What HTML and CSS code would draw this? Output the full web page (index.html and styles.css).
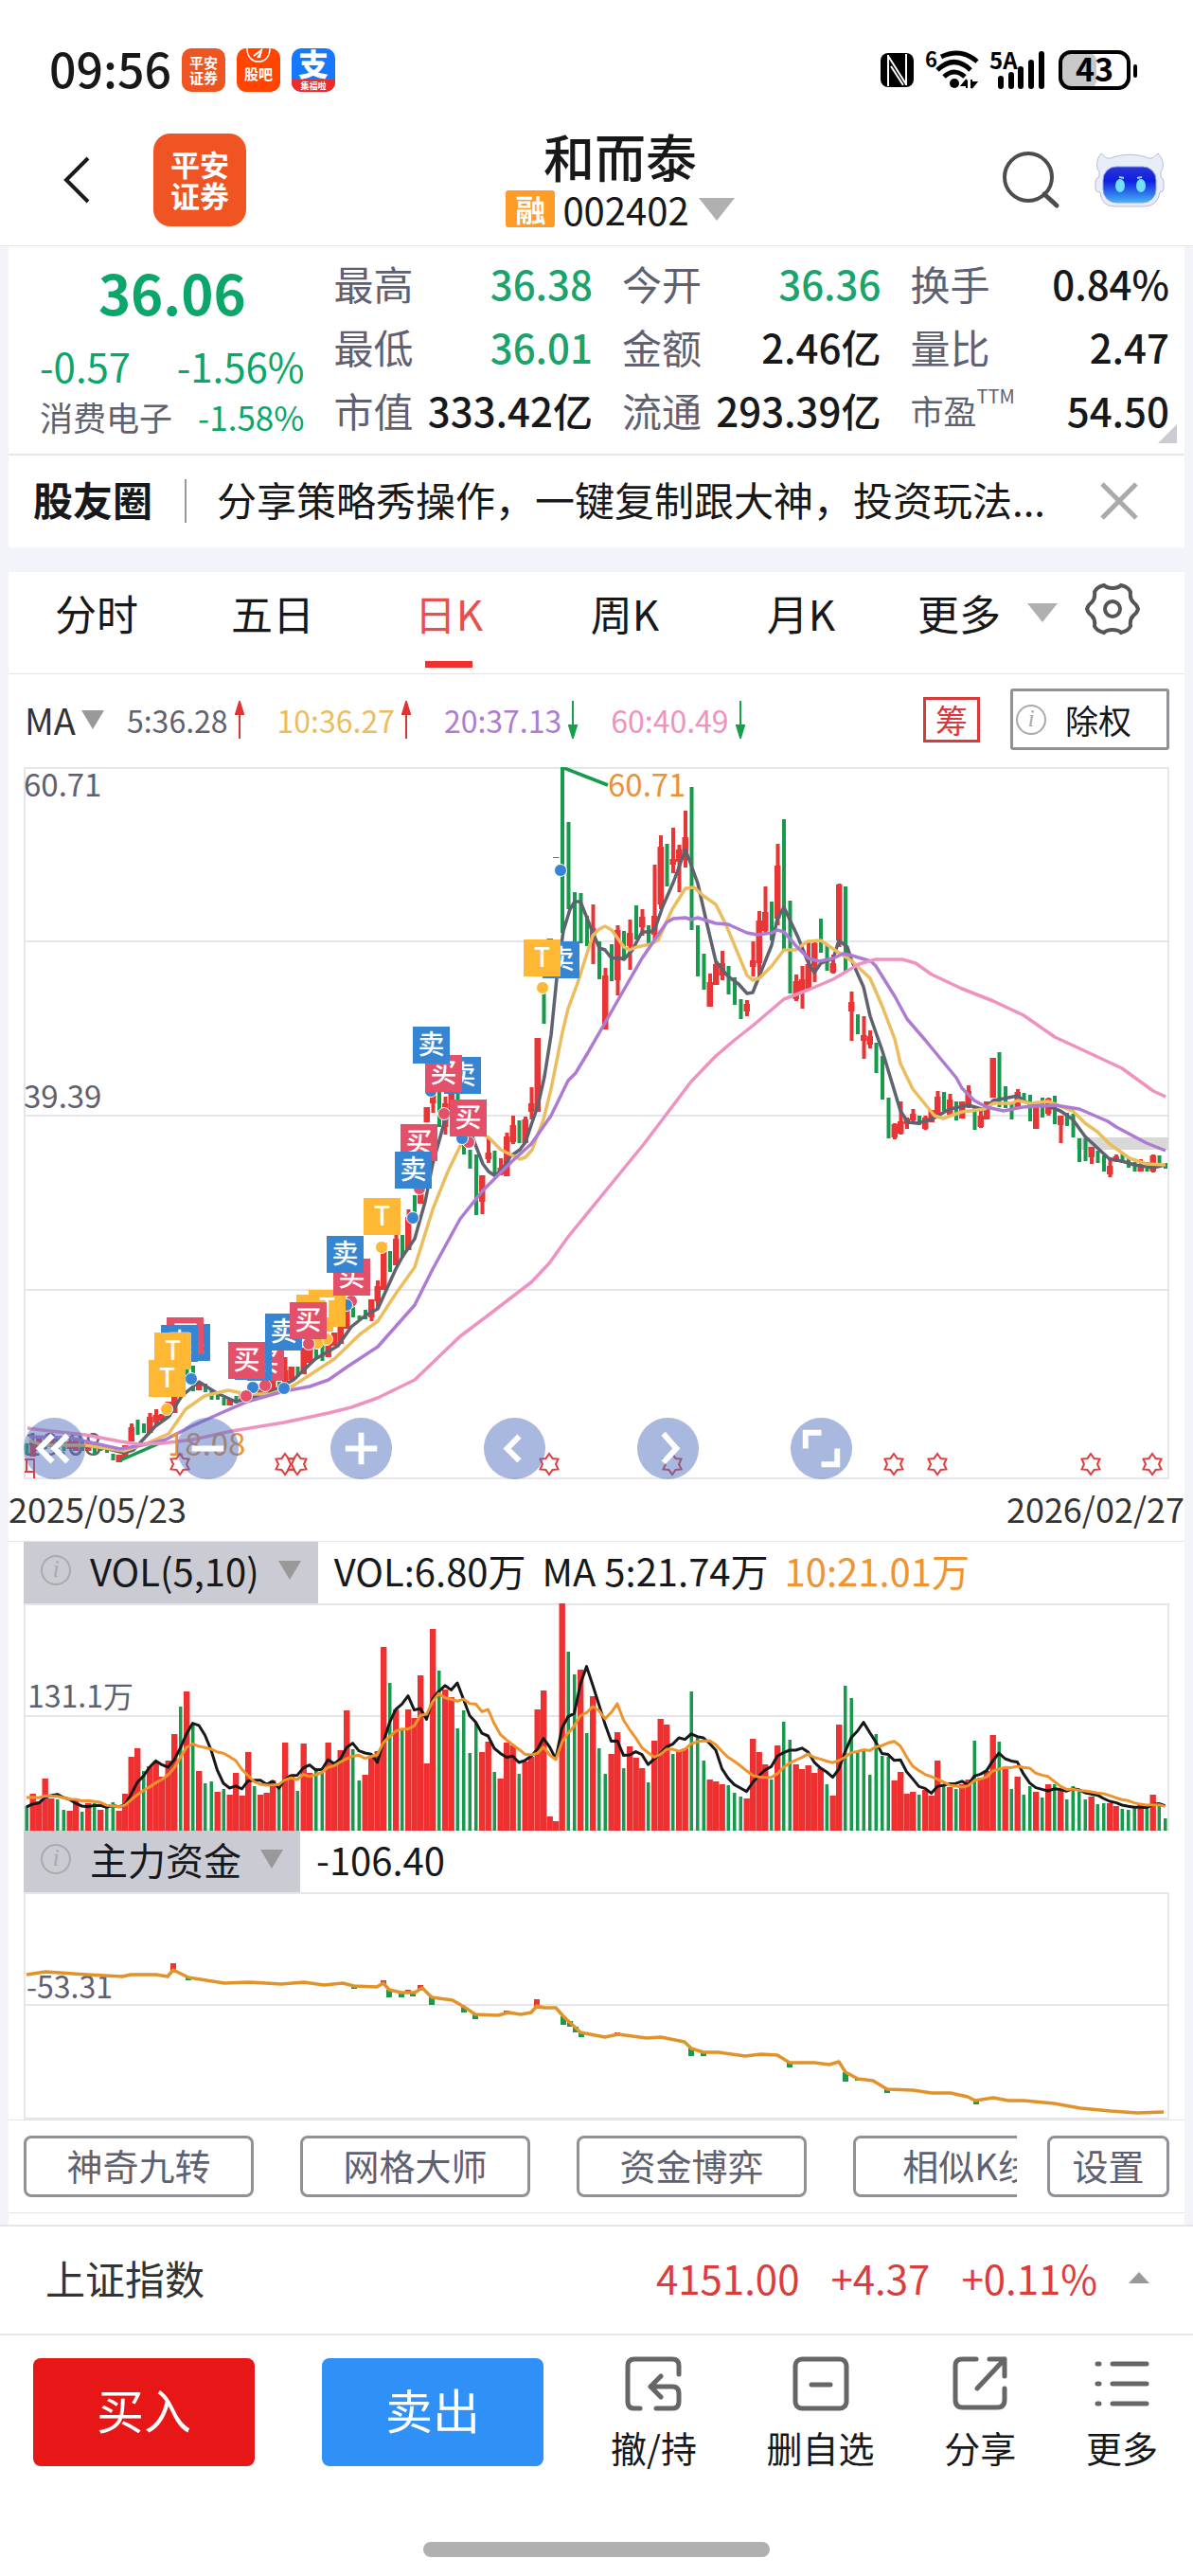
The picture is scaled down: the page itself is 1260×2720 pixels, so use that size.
FILE: index.html
```html
<!DOCTYPE html>
<html lang="zh-CN">
<head>
    <meta charset="UTF-8">
    <meta name="viewport" content="width=device-width, initial-scale=1.0">
    <title>和而泰 002402</title>
    <link rel="stylesheet" href="styles.css">
</head>
<body>
    <div class="status">
        <span class="time">09:56</span>
        <span class="app app-pa">平安<br>证券</span>
        <span class="app app-gb">
            <svg viewBox="0 0 46 16" width="46" height="16"><path d="M11 0c0 9 5 14 12 14S35 9 35 0" fill="none" stroke="#fff" stroke-width="1.5"/><path d="M18 8l8-6-2 8M22 10l4-6" stroke="#fff" stroke-width="2" fill="none"/></svg>
            股吧
        </span>
        <span class="app app-zfb"><b>支</b><i>集福啦</i></span>
        <svg class="sys" viewBox="0 0 276 48" width="276" height="48">
            <rect x="1" y="6" width="35" height="36" rx="8"/>
            <path d="M9 8v33M28 7v33M9 9l19 30M12 20l13 20" stroke="#fff" stroke-width="2" fill="none"/>
            <text x="48" y="21" font-size="22" font-weight="bold">6</text>
            <g fill="none" stroke="#000" stroke-width="5">
                <path d="M65 10q21-10 38 5M61 24q18-17 35 0M68 31q11-10 22 0"/>
            </g>
            <circle cx="79" cy="38" r="5"/>
            <path d="M92 35v8M92 34l-5 6h5M97 43v-9M97 43l5-6h-5" stroke="#000" stroke-width="2"/>
            <text x="116" y="23" font-size="24" font-weight="bold">5A</text>
            <path d="M128 33v8M139 29v12M149 23v18M160 16v25M171 7v34" stroke="#000" stroke-width="6" stroke-linecap="round"/>
            <rect x="193" y="6" width="36" height="37" fill="#c8c8c8" rx="8"/>
            <rect x="191" y="5" width="72" height="38" rx="11" fill="none" stroke="#000" stroke-width="4"/>
            <text x="227" y="36" font-size="34" font-weight="bold" text-anchor="middle">43</text>
            <path d="M270 20v10" stroke="#000" stroke-width="4" stroke-linecap="round"/>
        </svg>
    </div>

    <header class="header">
        <button class="back" aria-label="返回"><svg viewBox="0 0 30 50" width="30" height="50"><path d="M27 2L4 25l23 23" fill="none" stroke="#1a1a1a" stroke-width="4"/></svg></button>
        <a class="logo" href="#">平安<br>证券</a>
        <div class="stock">
            <h1>和而泰</h1>
            <p><em>融</em>002402<span class="down big"></span></p>
        </div>
        <button class="search" aria-label="搜索"><svg viewBox="0 0 62 62" width="62" height="62"><circle cx="28" cy="28" r="25" fill="none" stroke="#4d4d4d" stroke-width="4"/><path d="M45 46l13 12" stroke="#4d4d4d" stroke-width="5" stroke-linecap="round"/></svg></button>
        <button class="robot" aria-label="智能助手">
            <svg viewBox="0 0 74 60" width="74" height="60">
                <defs><linearGradient id="face" x1="0" y1="0" x2="0" y2="1"><stop offset="0" stop-color="#2a35d8"/><stop offset=".4" stop-color="#0f1fe0"/><stop offset="1" stop-color="#45b4f5"/></linearGradient></defs>
                <path d="M7 2c4 3 5 6 10 5 12-5 28-5 40 0 5 1 6-2 10-5 6 6 7 15 3 19v6q3 1 3 5v7q0 4-4 4-2 15-17 15H22Q7 58 6 43q-5 0-5-4v-7q0-4 4-5v-6C1 17 2 8 7 2z" fill="#e9edf8" stroke="#b4bdd6" stroke-width="1"/>
                <rect x="9" y="16" width="56" height="38" rx="14" fill="url(#face)" stroke="#8fa0e8"/>
                <ellipse cx="27" cy="36" rx="5" ry="7" fill="#6fe0ff"/><ellipse cx="49" cy="36" rx="5" ry="7" fill="#6fe0ff"/>
                <path d="M26 27l5 1M50 27l-5 1" stroke="#8fd8ff" stroke-width="2"/>
            </svg>
        </button>
    </header>

    <main class="main">
        <section class="quote">
            <div class="now">
                <strong>36.06</strong>
                <p class="change"><span>-0.57</span><span>-1.56%</span></p>
                <p class="sector"><a href="#">消费电子</a><span>-1.58%</span></p>
            </div>
            <dl>
                <div><dt>最高</dt><dd class="fall">36.38</dd></div>
                <div><dt>最低</dt><dd class="fall">36.01</dd></div>
                <div><dt>市值</dt><dd>333.42亿</dd></div>
            </dl>
            <dl>
                <div><dt>今开</dt><dd class="fall">36.36</dd></div>
                <div><dt>金额</dt><dd>2.46亿</dd></div>
                <div><dt>流通</dt><dd>293.39亿</dd></div>
            </dl>
            <dl>
                <div><dt>换手</dt><dd>0.84%</dd></div>
                <div><dt>量比</dt><dd>2.47</dd></div>
                <div><dt class="pe">市盈<sup>TTM</sup></dt><dd>54.50</dd></div>
            </dl>
        </section>

        <section class="notice">
            <b>股友圈</b>
            <a href="#">分享策略秀操作，一键复制跟大神，投资玩法...</a>
            <button aria-label="关闭"><svg viewBox="0 0 42 42" width="42" height="42"><path d="M3 3l36 36M39 3L3 39" stroke="#aaa" stroke-width="5"/></svg></button>
        </section>

        <section class="panel">
            <nav class="tabs">
                <button>分时</button>
                <button>五日</button>
                <button class="active">日K</button>
                <button>周K</button>
                <button>月K</button>
                <button class="more">更多<span class="down"></span></button>
                <button class="gear" aria-label="设置"><svg viewBox="0 0 58 58" width="58" height="58"><path d="M20 4q3 3 9 3t9-3q8 2 10 7-1 7 3 11 4 3 5 7-1 4-5 7-4 4-3 11-2 5-10 7-3-3-9-3t-9 3q-8-2-10-7 1-7-3-11-4-3-5-7 1-4 5-7 4-4 3-11 2-5 10-7z" fill="none" stroke="#555" stroke-width="4"/><circle cx="29" cy="29" r="8" fill="none" stroke="#555" stroke-width="4"/></svg></button>
            </nav>

            <div class="ma-row">
                <button class="ma">MA<span class="down soft"></span></button>
                <span class="ma5">5:36.28<svg class="arrow rise" viewBox="0 0 10 40"><path d="M5 40V8M1 14L5 1l4 13z"/></svg></span>
                <span class="ma10">10:36.27<svg class="arrow rise" viewBox="0 0 10 40"><path d="M5 40V8M1 14L5 1l4 13z"/></svg></span>
                <span class="ma20">20:37.13<svg class="arrow drop" viewBox="0 0 10 40"><path d="M5 0v32M1 26l4 13 4-13z"/></svg></span>
                <span class="ma60">60:40.49<svg class="arrow drop" viewBox="0 0 10 40"><path d="M5 0v32M1 26l4 13 4-13z"/></svg></span>
                <button class="chip">筹</button>
                <button class="adjust"><i class="info">i</i>除权</button>
            </div>

            <div class="kline">
                <svg id="kline" viewBox="0 0 1210 752"></svg>
                <div class="tools">
                    <button aria-label="最早"><svg viewBox="0 0 66 66"><path d="M31 19L17 33l14 14M47 19L33 33l14 14"/></svg></button>
                    <button aria-label="缩小"><svg viewBox="0 0 66 66"><path d="M16 33h34"/></svg></button>
                    <button aria-label="放大"><svg viewBox="0 0 66 66"><path d="M16 33h34M33 16v34"/></svg></button>
                    <button aria-label="左移"><svg viewBox="0 0 66 66"><path d="M38 20L25 33l13 13"/></svg></button>
                    <button aria-label="右移"><svg viewBox="0 0 66 66"><path d="M28 17l14 16-14 15"/></svg></button>
                    <button aria-label="全屏"><svg viewBox="0 0 66 66"><path d="M16 33V16h17M33 50h17V33"/></svg></button>
                </div>
            </div>
            <div class="dates"><span>2025/05/23</span><span>2026/02/27</span></div>

            <div class="sub-head">
                <button><i class="info">i</i>VOL(5,10)<span class="down soft"></span></button>
                <span>VOL:6.80万</span><span>MA 5:21.74万</span><span class="orange">10:21.01万</span>
            </div>
            <svg id="vol" class="chart" viewBox="0 0 1210 240"></svg>

            <div class="sub-head">
                <button><i class="info">i</i>主力资金<span class="down soft"></span></button>
                <span>-106.40</span>
            </div>
            <svg id="fund" class="chart" viewBox="0 0 1210 240"></svg>

            <div class="plugins">
                <div class="list">
                    <button>神奇九转</button>
                    <button>网格大师</button>
                    <button>资金博弈</button>
                    <button>相似K线</button>
                </div>
                <button class="set">设置</button>
            </div>
        </section>
    </main>

    <div class="index">
        <span class="name">上证指数</span>
        <span>4151.00</span><span>+4.37</span><span>+0.11%</span>
        <i class="up"></i>
    </div>

    <footer class="footer">
        <button class="buy">买入</button>
        <button class="sell">卖出</button>
        <div class="actions">
            <a href="#"><svg viewBox="0 0 60 60"><path d="M57 20V11q0-7-7-7H10q-7 0-7 7v38q0 7 7 7h6M33 56h17q7 0 7-7V40q0-7-7-7H30M38 22L27 33l11 11"/></svg>撤/持</a>
            <a href="#"><svg viewBox="0 0 60 60"><rect x="3" y="4" width="54" height="52" rx="7"/><path d="M20 31h20"/></svg>删自选</a>
            <a href="#"><svg viewBox="0 0 60 60"><path d="M26 4H11q-7 0-7 7v36q0 8 8 8h36q8 0 8-8V35M40 4h16v18M56 4L27 35"/></svg>分享</a>
            <a href="#"><svg viewBox="0 0 60 60"><path d="M4 9h2M20 9h36M4 30h2M20 30h36M4 51h2M20 51h36"/></svg>更多</a>
        </div>
    </footer>
    <div class="home"></div>

    <script src="chart.js"></script>
</body>
</html>
```
FILE: styles.css
```css
* {
    box-sizing: border-box;
    margin: 0;
    padding: 0;
}
body {
    font-family: "Noto Sans CJK SC", "Noto Sans", sans-serif;
    font-size: 42px;
    color: #17181a;
    background-color: #fff;
}
button {
    font: inherit;
    color: inherit;
    border: 0;
    background: none;
}
a {
    color: inherit;
    text-decoration: none;
}
em, i {
    font-style: normal;
}
svg {
    display: block;
}

/* 状态栏 */
.status {
    display: flex;
    align-items: center;
    height: 118px;
    padding: 30px 55px 0 52px;
}
.time {
    width: 140px;
    padding-bottom: 6px;
    font-size: 50px;
    font-weight: 500;
}
.app {
    display: flex;
    flex-direction: column;
    align-items: center;
    justify-content: center;
    width: 46px;
    height: 46px;
    margin-right: 12px;
    overflow: hidden;
    border-radius: 10px;
    color: #fff;
    font-size: 15px;
    line-height: 16px;
    font-weight: bold;
}
.app-pa {
    display: block;
    padding-top: 7px;
    text-align: center;
    background-color: #ef5423;
}
.app-gb {
    justify-content: flex-start;
    gap: 3px;
    background-color: #ff4500;
}
.app-zfb {
    justify-content: flex-start;
    background-color: #1677ff;
}
.app-zfb b {
    height: 33px;
    font-size: 32px;
    line-height: 30px;
}
.app-zfb i {
    width: 100%;
    font-size: 9px;
    line-height: 13px;
    text-align: center;
    background-color: #f02a2a;
}
.sys {
    margin-left: auto;
}

/* 顶部 */
.header {
    display: flex;
    align-items: center;
    height: 142px;
    padding: 2px 30px 0 52px;
    border-bottom: 1px solid #e4e4e6;
}
.back {
    width: 58px;
    padding-left: 14px;
}
.logo {
    width: 98px;
    height: 98px;
    margin-left: 52px;
    padding-top: 15px;
    border-radius: 18px;
    color: #fff;
    font-size: 31px;
    line-height: 33px;
    font-weight: bold;
    text-align: center;
    background-color: #f05423;
}
.stock {
    flex: 1;
    padding-right: 8px;
    text-align: center;
}
.stock h1 {
    padding-bottom: 4px;
    font-size: 54px;
    line-height: 58px;
    font-weight: 500;
}
.stock p {
    display: flex;
    align-items: center;
    justify-content: center;
    font-size: 40px;
    line-height: 46px;
}
.stock em {
    width: 52px;
    margin-right: 8px;
    border-radius: 3px;
    color: #fff;
    font-size: 32px;
    line-height: 39px;
    font-weight: bold;
    background-color: #ff9c28;
}
.down {
    display: inline-block;
    border: 16px solid transparent;
    border-top: 20px solid #b0b0b0;
    border-bottom: 0;
}
.down.big {
    margin-left: 10px;
    border-width: 24px 19px 0;
}
.down.soft {
    border-width: 20px 12px 0;
    border-top-color: #999;
}
.search {
    margin-right: 36px;
}

/* 行情 */
.main {
    padding: 0 9px;
    background-color: #f3f4f9;
}
.quote {
    display: grid;
    grid-template-columns: 279fr 273fr 273fr 273fr;
    column-gap: 31px;
    position: relative;
    padding: 5px 16px 13px 33px;
    border-bottom: 2px solid #e6e6e8;
    background-color: #fff;
}
.quote::after {
    content: "";
    position: absolute;
    right: 8px;
    bottom: 11px;
    border-left: 20px solid transparent;
    border-bottom: 20px solid #cbcbd4;
}
.now {
    color: #0aa66a;
}
.now strong {
    display: block;
    font-size: 58px;
    line-height: 86px;
    text-align: center;
}
.now p {
    display: flex;
    justify-content: space-between;
}
.change {
    line-height: 70px;
}
.sector {
    font-size: 35px;
    line-height: 38px;
}
.sector a {
    color: #5f6070;
}
.quote dl div {
    display: flex;
    justify-content: space-between;
    line-height: 67px;
    white-space: nowrap;
}
.quote dt {
    color: #5f6070;
}
.quote dd {
    font-weight: 500;
}
.quote .fall {
    color: #1aa36c;
}
.quote .pe {
    font-size: 35px;
}
.pe sup {
    font-size: 20px;
    line-height: 20px;
    vertical-align: 22px;
}

/* 股友圈 */
.notice {
    display: flex;
    align-items: center;
    height: 97px;
    padding: 0 48px 2px 26px;
    background-color: #fff;
}
.notice b {
    padding-bottom: 4px;
}
.notice a {
    flex: 1;
    margin-left: 34px;
    padding: 0 0 4px 32px;
    overflow: hidden;
    border-left: 2px solid #999;
    line-height: 42px;
    white-space: nowrap;
}

/* K线面板 */
.panel {
    margin-top: 26px;
    padding-bottom: 12px;
    background-color: #fff;
}
.tabs {
    display: flex;
    height: 108px;
    border-bottom: 1px solid #e4e4e6;
    font-size: 44px;
}
.tabs button {
    position: relative;
    flex: 186;
    padding-bottom: 22px;
}
.tabs .active {
    color: #e85050;
}
.tabs .active::after {
    content: "";
    position: absolute;
    left: 50%;
    bottom: 6px;
    width: 50px;
    height: 7px;
    margin-left: -25px;
    background-color: #ee3030;
}
.tabs .more {
    display: flex;
    flex: 178;
    align-items: center;
    justify-content: flex-end;
    gap: 28px;
}
.tabs .gear {
    display: flex;
    flex: 134;
    align-items: center;
    justify-content: center;
    padding-bottom: 30px;
}
.gear svg {
    margin-right: 18px;
}
.ma-row {
    display: flex;
    align-items: center;
    height: 98px;
    padding: 0 16px 3px 17px;
    font-size: 32px;
}
.ma-row > span {
    display: flex;
    align-items: center;
    gap: 7px;
    margin-right: 35px;
}
.ma {
    display: flex;
    align-items: center;
    gap: 6px;
    margin-right: 24px;
    font-size: 38px;
    color: #333;
}
.arrow {
    width: 10px;
    height: 40px;
    stroke-width: 2;
}
.rise {
    fill: #e23333;
    stroke: #e23333;
}
.drop {
    fill: #17a04b;
    stroke: #17a04b;
}
.ma5 {
    color: #5f6070;
}
.ma10 {
    color: #ecbd5e;
}
.ma20 {
    color: #ae7bd2;
}
.ma60 {
    color: #ef92c0;
}
.chip {
    width: 60px;
    height: 48px;
    margin-left: auto;
    margin-right: 32px;
    border: 3px solid #d63a3a;
    color: #d63a3a;
    font-size: 34px;
    line-height: 40px;
}
.adjust {
    display: flex;
    align-items: center;
    gap: 20px;
    width: 168px;
    height: 65px;
    padding-left: 3px;
    border: 3px solid #909097;
    border-radius: 3px;
    font-size: 35px;
    line-height: 54px;
}
.info {
    width: 32px;
    height: 32px;
    border: 2px solid #aaa;
    border-radius: 50%;
    color: #aaa;
    font: italic 26px/26px "Liberation Serif", serif;
    text-align: center;
}
.kline {
    position: relative;
    margin: 0 16px;
}
.kline text {
    font-size: 33px;
}
.kline .mark {
    font-size: 28px;
    font-weight: 500;
}
.tools {
    display: flex;
    position: absolute;
    left: 0;
    bottom: 0;
    width: 100%;
    gap: 97px;
}
.tools button {
    width: 65px;
    height: 65px;
    border-radius: 50%;
    background-color: rgba(84, 113, 190, .5);
}
.tools path {
    fill: none;
    stroke: #fff;
    stroke-width: 6;
}
.dates {
    display: flex;
    justify-content: space-between;
    padding-bottom: 4px;
    border-bottom: 1px solid #e4e4e6;
    color: #333;
    font-size: 36px;
    line-height: 61px;
}
.sub-head {
    display: flex;
    align-items: center;
    gap: 17px;
    height: 65px;
    padding: 0 16px;
    font-size: 40px;
}
.sub-head > span {
    padding-bottom: 5px;
}
.sub-head button {
    display: flex;
    align-items: center;
    gap: 20px;
    height: 100%;
    padding: 0 18px 5px 18px;
    background-color: #cbcbd4;
}
.orange {
    color: #ee9433;
}
.chart {
    margin: 0 16px;
    font-size: 32px;
}
.plugins {
    display: flex;
    gap: 32px;
    padding: 16px;
    border-top: 1px solid #e4e4e6;
    border-bottom: 1px solid #e4e4e6;
    color: #5f6070;
    font-size: 38px;
}
.list {
    display: flex;
    flex: 1;
    gap: 49px;
    overflow: hidden;
}
.plugins button {
    flex: none;
    width: 243px;
    height: 65px;
    padding-bottom: 4px;
    border: 3px solid #909097;
    border-radius: 8px;
    line-height: 54px;
}
.plugins .set {
    width: 129px;
}

/* 底部指数 */
.index {
    display: flex;
    align-items: center;
    height: 117px;
    padding: 0 46px 6px 48px;
    border-top: 2px solid #e6e6e8;
    border-bottom: 2px solid #e6e6e8;
    color: #dc3c3c;
}
.index span {
    margin-right: 33px;
}
.index .name {
    flex: 1;
    color: #333;
}
.up {
    border: 11px solid transparent;
    border-top: 0;
    border-bottom: 12px solid #999;
}
.footer {
    display: flex;
    padding: 24px 37px 0 35px;
}
.footer button {
    width: 234px;
    height: 114px;
    margin-right: 71px;
    padding-bottom: 8px;
    border-radius: 8px;
    color: #fff;
    font-size: 50px;
}
.footer .buy {
    background-color: #e81717;
}
.footer .sell {
    background-color: #2f90f8;
}
.actions {
    display: flex;
    flex: 1;
    justify-content: space-between;
}
.actions a {
    font-size: 38px;
    line-height: 44px;
}
.actions svg {
    width: 60px;
    height: 60px;
    margin: -3px auto 15px;
    fill: none;
    stroke: #666;
    stroke-width: 5;
    stroke-linecap: round;
    stroke-linejoin: round;
}
.home {
    width: 29%;
    height: 16px;
    margin: 78px auto 20px;
    border-radius: 8px;
    background-color: #b0b0b0;
}
```
FILE: chart.js
```js
const RED = '#e83535'
const GREEN = '#179a4b'
const STEP = 6.5

const x = i => 3 + i * STEP
const line = (points, color, width = 3.5) =>
    `<polyline points="${points}" fill="none" stroke="${color}" stroke-width="${width}" stroke-linejoin="round"/>`
const rect = (x, y, w, h, color) =>
    `<rect x="${x}" y="${y}" width="${w}" height="${h}" fill="${color}"/>`
const frame = (h, rows) => {
    let s = `<rect x="1" y="1" width="1208" height="${h - 2}" fill="none" stroke="#e6e6ea" stroke-width="2"/>`
    rows.forEach(y => s += `<path d="M0 ${y}H1210" stroke="#e6e6ea" stroke-width="2"/>`)
    return s
}

// K线: 颜色 最高 最低 [实体上 实体下]
const candles = `g 714 726,r 712 728,r 708 722,g 709 720,r 706 718,g 708 720,g 710 722,r 712 720,r 710 722,g 712 722,r 713 722,g 717 726,g 718 722,g 720 724,g 725 732,r 726 734,r 716 730,r 693 712 697 712,g 689 705,g 693 703,r 682 703 686 703,r 678 696 684 692,r 683 690,r 670 686,r 660 682,r 637 664,g 633 649,g 632 659,r 649 658,g 651 660,g 657 668,g 662 668,g 666 674,r 668 674,g 664 672,r 662 670,r 657 668,g 653 664,r 651 664,r 645 662,r 641 660,g 649 657,r 623 653 637 651,r 633 647,g 633 643,r 613 641,r 609 629,g 613 625,g 609 627,r 599 623,r 597 611,r 589 609,r 572 593,g 570 581,g 579 583,g 573 583,r 562 585 562 581,r 542 572 548 564,r 502 552,g 511 533,r 488 526 498 526,g 494 518,r 467 510 475 510,g 452 472,r 439 461,r 359 375,r 336 365 342 355,g 340 380,r 348 388 355 380,r 340 368,g 336 368,g 388 409,g 404 424,g 409 473,r 431 472 431 459,r 392 418 407 414,g 405 429,r 413 431 423 430,r 386 432 390 432,r 368 398 378 396,g 373 397,r 369 397 372 397,r 338 372 355 364,r 286 364,g 227 271,r 181 184,r 95 96,g 0 175,g 58 150,g 132 185,g 133 186,g 157 189,r 145 208 170 182,g 184 224,r 212 277 220 277,g 187 226,r 167 241 172 225,g 173 203,r 161 214 175 189,g 146 182,r 150 178 158 169,g 167 187,r 103 182 157 177,r 72 150 84 145,g 81 126,r 64 112 97 103,r 82 132 87 100,r 46 106 74 93,g 21 172,g 167 221,g 197 235,r 218 253 227 253,r 205 230 208 230,r 194 225 207 220,g 210 240,g 222 251,g 245 266,r 246 263 250 258,r 184 221 204 211,r 152 220 162 207,r 126 177 153 173,g 142 183,r 81 167 104 160,g 55 193,g 141 239,r 219 247 226 245,r 210 255 224 237,r 185 235 208 235,r 185 227 186 210,g 160 196,g 187 215,r 198 218 207 217,r 123 190 124 183,g 126 217,r 237 289 248 258,g 261 282,r 263 308 283 289,r 278 297 284 293,g 291 323,g 305 351,g 349 392,r 376 393 377 391,r 353 388 374 387,r 370 382 371 377,r 361 375 366 373,g 368 378,r 368 383 370 382,r 362 375,r 342 367 348 367,g 343 363,r 345 367 351 367,g 353 373,r 353 371,r 336 360 342 358,g 358 383,r 363 381 368 380,r 353 372,r 307 349,g 301 359,g 337 360,g 355 372,r 340 360 343 360,g 344 353,g 346 374,r 355 382,g 349 370,r 349 368 350 366,g 347 377,r 368 397 368 378,g 365 379,g 366 391,g 392 417,g 392 416,r 401 419 401 412,g 405 418,g 410 427,r 412 433 421 430,r 409 417 411 415,g 408 418,g 413 423,g 417 427,r 414 427 422 427,g 417 427,r 409 428 410 427,g 410 422,g 418 424`

const ma5 = '6,714 57,716 81,718 106,724 116,721 139,696 153,686 167,664 185,649 204,661 224,670 240,666 263,659 285,647 308,625 332,611 346,591 361,579 374,572 393,530 400,517 413,498 424,459 432,419 444,376 455,356 465,368 473,388 485,419 491,427 497,431 504,427 514,411 524,404 530,396 536,378 543,358 550,327 557,283 563,223 570,173 577,150 582,142 588,142 600,172 608,191 614,193 621,202 628,201 634,203 643,193 653,174 662,174 667,170 675,147 686,122 699,87 712,123 722,167 731,205 744,221 755,229 764,239 770,238 790,188 796,160 803,148 818,180 828,205 835,217 842,207 855,202 861,183 870,190 874,203 887,232 894,263 907,300 920,343 926,363 934,375 943,376 959,372 978,361 998,357 1015,362 1024,352 1035,350 1050,347 1056,352 1063,356 1082,358 1095,363 1108,372 1121,390 1147,414 1160,416 1173,420 1193,423 1206,420'
const ma10 = '6,711 20,716 65,716 106,722 130,714 153,704 171,678 191,664 216,658 236,662 261,662 285,653 328,625 355,599 374,585 393,556 413,528 432,467 448,427 463,396 477,384 491,391 504,404 514,409 524,414 530,412 537,404 549,372 557,340 569,280 575,255 585,228 601,178 608,171 614,168 621,172 634,190 640,193 647,190 662,187 670,183 685,150 699,128 708,127 718,136 731,145 742,167 764,220 770,225 777,223 790,210 803,193 815,193 828,184 842,183 855,192 875,205 894,223 907,253 920,287 926,313 939,340 962,368 971,371 991,364 1015,361 1024,355 1043,355 1050,352 1063,355 1082,353 1108,363 1121,376 1134,385 1147,398 1168,413 1186,419 1206,420'
const ma20 = '6,707 48,708 102,720 130,715 150,710 175,697 204,684 236,670 275,659 302,654 322,647 342,633 374,612 413,568 432,530 461,477 485,447 517,415 536,398 557,368 575,331 583,323 595,303 614,270 634,235 653,202 666,183 679,164 686,160 699,159 705,161 712,159 731,165 744,166 764,175 775,177 790,175 796,172 803,174 816,189 829,202 840,205 855,202 865,197 875,199 895,205 900,210 920,242 933,266 952,288 985,328 991,339 1004,352 1017,359 1035,363 1055,359 1089,357 1115,361 1145,374 1154,380 1186,397 1206,405'
const ma60 = '4,698 28,701 65,705 102,712 122,715 146,714 179,710 220,701 275,692 322,682 346,676 374,666 413,647 461,601 489,580 536,544 555,524 575,496 615,447 655,398 705,332 731,305 751,288 770,273 803,245 829,235 855,224 882,208 900,203 928,203 942,207 959,219 991,234 1024,247 1056,262 1089,285 1115,297 1160,318 1193,342 1206,348'

// 买卖点标记
const MARK = { 买: '#e4506a', 卖: '#3685d2', T: '#ffb833' }
const dots = [['T', 151, 678], ['卖', 177, 646], ['卖', 242, 655], ['买', 235, 664], ['买', 255, 653], ['卖', 275, 656], ['T', 320, 604], ['T', 310, 608], ['买', 301, 609], ['买', 346, 564], ['卖', 341, 568], ['T', 378, 507], ['卖', 411, 476], ['买', 418, 445], ['卖', 430, 342], ['买', 444, 366], ['买', 470, 396], ['卖', 463, 392], ['T', 548, 233], ['卖', 567, 109]]
const marks = [['卖', 158, 588], ['买', 151, 581], ['卖', 145, 589], ['T', 138, 597], ['T', 132, 626], ['买', 236, 609], ['卖', 223, 608], ['卖', 255, 577], ['买', 216, 607], ['T', 288, 557], ['T', 301, 552], ['买', 281, 565], ['买', 327, 519], ['卖', 320, 495], ['T', 359, 455], ['卖', 444, 306], ['买', 424, 304], ['卖', 411, 274], ['买', 398, 377], ['卖', 392, 406], ['买', 450, 351], ['卖', 548, 184], ['T', 528, 182]]
const stars = [165, 276, 289, 555, 685, 919, 965, 1127, 1192]

function drawKline() {
    let s = frame(752, [184, 368, 552])
    s += rect(1112, 391, 97, 13, '#d8d8d8')
    s += '<text x="0" y="31" fill="#5f6070">60.71</text><text x="0" y="360" fill="#5f6070">39.39</text><text x="0" y="727" fill="#5f6070">18.08</text>'
    candles.split(',').forEach((item, i) => {
        const [type, high, low, top = high, bottom = low] = item.split(' ')
        const color = type === 'r' ? RED : GREEN
        s += rect(x(i) - 1.5, high, 4, low - high, color)
        if (type === 'r') s += rect(x(i) - 3, top, 6.5, bottom - top, color)
    })
    s += line('571,1 617,19', GREEN) + line('102,732 150,711', GREEN)
    s += line(ma5, '#5f6370') + line(ma10, '#ecbd5e') + line(ma20, '#ae7bd2') + line(ma60, '#ef92c0')
    s += '<text x="617" y="31" fill="#e8923a">60.71</text><text x="152" y="727" fill="#e8923a">18.08</text>'
    dots.forEach(([type, cx, cy]) => {
        s += `<circle cx="${cx}" cy="${cy}" r="6.5" fill="${MARK[type]}" stroke="#fff"/>`
    })
    marks.forEach(([type, left, top]) => {
        s += rect(left, top, 39, 39, MARK[type])
        s += `<text class="mark" x="${left + 19.5}" y="${top + 29}" fill="#fff" text-anchor="middle">${type}</text>`
    })
    stars.forEach(cx => {
        let d = ''
        for (let k = 0; k < 12; k++) {
            const r = k % 2 ? 7 : 11
            const a = k * Math.PI / 6
            d += `${cx + r * Math.sin(a)},${736 - r * Math.cos(a)} `
        }
        s += `<polygon points="${d}" fill="none" stroke="#dc4040" stroke-width="2"/>`
    })
    s += '<path d="M1 731h10v20M11 744H1M3 731v13" fill="none" stroke="#dc4040" stroke-width="2"/>'
    document.querySelector('#kline').innerHTML = s
}

// 成交量
const volumes = 'g26 r39 r31 r55 r34 g33 g22 r21 r34 g20 r29 g29 r22 g24 g30 r21 r39 r78 r87 g63 r68 r73 r57 r74 r102 g131 r147 g113 r63 g50 g52 r41 g44 r38 r61 r37 r83 g47 r38 r40 r53 g46 r93 r59 g42 r92 r61 g66 g63 r93 r71 r85 r127 g86 g53 r59 r79 r84 r194 g156 r128 g106 r128 r119 r164 r71 r213 g169 r149 r141 g108 g127 g82 g114 r83 r94 g62 r55 r93 r90 g60 r73 r78 r128 r148 r15 r10 r240 g189 g165 r170 g103 r142 g87 g60 r81 r104 g66 r89 r77 r66 g51 r95 r118 r112 g81 r84 r87 g147 g98 g74 r54 r52 r49 g48 g40 g36 r34 r97 r83 r70 g54 r90 g115 g96 r70 r65 r69 r61 r66 g49 r37 r112 g153 g140 g83 g84 g59 g102 g79 g78 r53 r62 r39 r41 g38 r43 r37 r74 g48 r46 g44 r49 r54 g95 r56 r63 r101 g94 r66 g44 r57 g38 g47 r41 g35 r49 g49 r43 g33 g47 g44 g33 r36 g28 g29 r29 r26 g23 g22 g24 r29 g24 r38 g28 g13'.split(' ')

function average(n, first) {
    const v = volumes.map(item => +item.slice(1))
    return v.map((_, i) => {
        let sum = 0
        for (let k = 0; k < n; k++) sum += i - k < 0 ? first : v[i - k]
        return `${x(i)},${240 - sum / n}`
    }).join(' ')
}

function drawVol() {
    let s = frame(240, [119])
    s += '<text x="4" y="110" fill="#5f6070">131.1万</text>'
    volumes.forEach((item, i) => {
        const h = +item.slice(1)
        s += item[0] === 'r' ? rect(x(i) - 3, 240 - h, 6.4, h, '#ef3030') : rect(x(i) - 1.5, 240 - h, 3.5, h, GREEN)
    })
    s += line(average(5, 25), '#17181a', 3) + line(average(10, 36), '#f0932b', 3)
    document.querySelector('#vol').innerHTML = s
}

// 主力资金
const fund = '3,87 23,84 67,87 104,89 113,87 140,87 152,89 158,82 174,90 212,96 239,95 272,97 296,95 317,98 337,96 349,99 373,100 380,96 386,103 399,106 413,106 421,101 431,111 453,114 465,121 477,129 501,130 512,127 525,129 536,127 542,120 550,122 562,122 570,131 588,148 614,153 628,150 658,154 673,153 698,158 705,165 718,169 734,169 762,173 779,171 796,172 809,180 835,180 851,182 861,179 868,190 881,197 897,199 912,208 939,209 959,212 979,212 997,216 1005,220 1024,217 1040,220 1056,220 1088,223 1116,228 1148,231 1176,233 1204,232'
const fundBars = [[155, 75, 8, RED], [377, 93, 4, RED], [403, 103, 4, RED], [416, 98, 5, RED], [507, 125, 3, RED], [539, 113, 8, RED], [624, 148, 3, RED], [171, 89, 4], [346, 98, 4], [383, 103, 8], [396, 106, 5], [408, 106, 4], [428, 111, 8], [462, 121, 6], [474, 129, 5], [567, 131, 9], [574, 136, 6], [580, 142, 6], [586, 147, 6], [702, 165, 8], [715, 169, 4], [806, 180, 5], [865, 190, 10], [878, 196, 3], [909, 208, 4], [1003, 220, 4]]

function drawFund() {
    let s = frame(240, [119])
    s += '<text x="3" y="112" fill="#5f6070">-53.31</text>'
    fundBars.forEach(([left, top, h, color = GREEN]) => s += rect(left, top, 6, h, color))
    s += line(fund, '#e0932a')
    document.querySelector('#fund').innerHTML = s
}

drawKline()
drawVol()
drawFund()
```
